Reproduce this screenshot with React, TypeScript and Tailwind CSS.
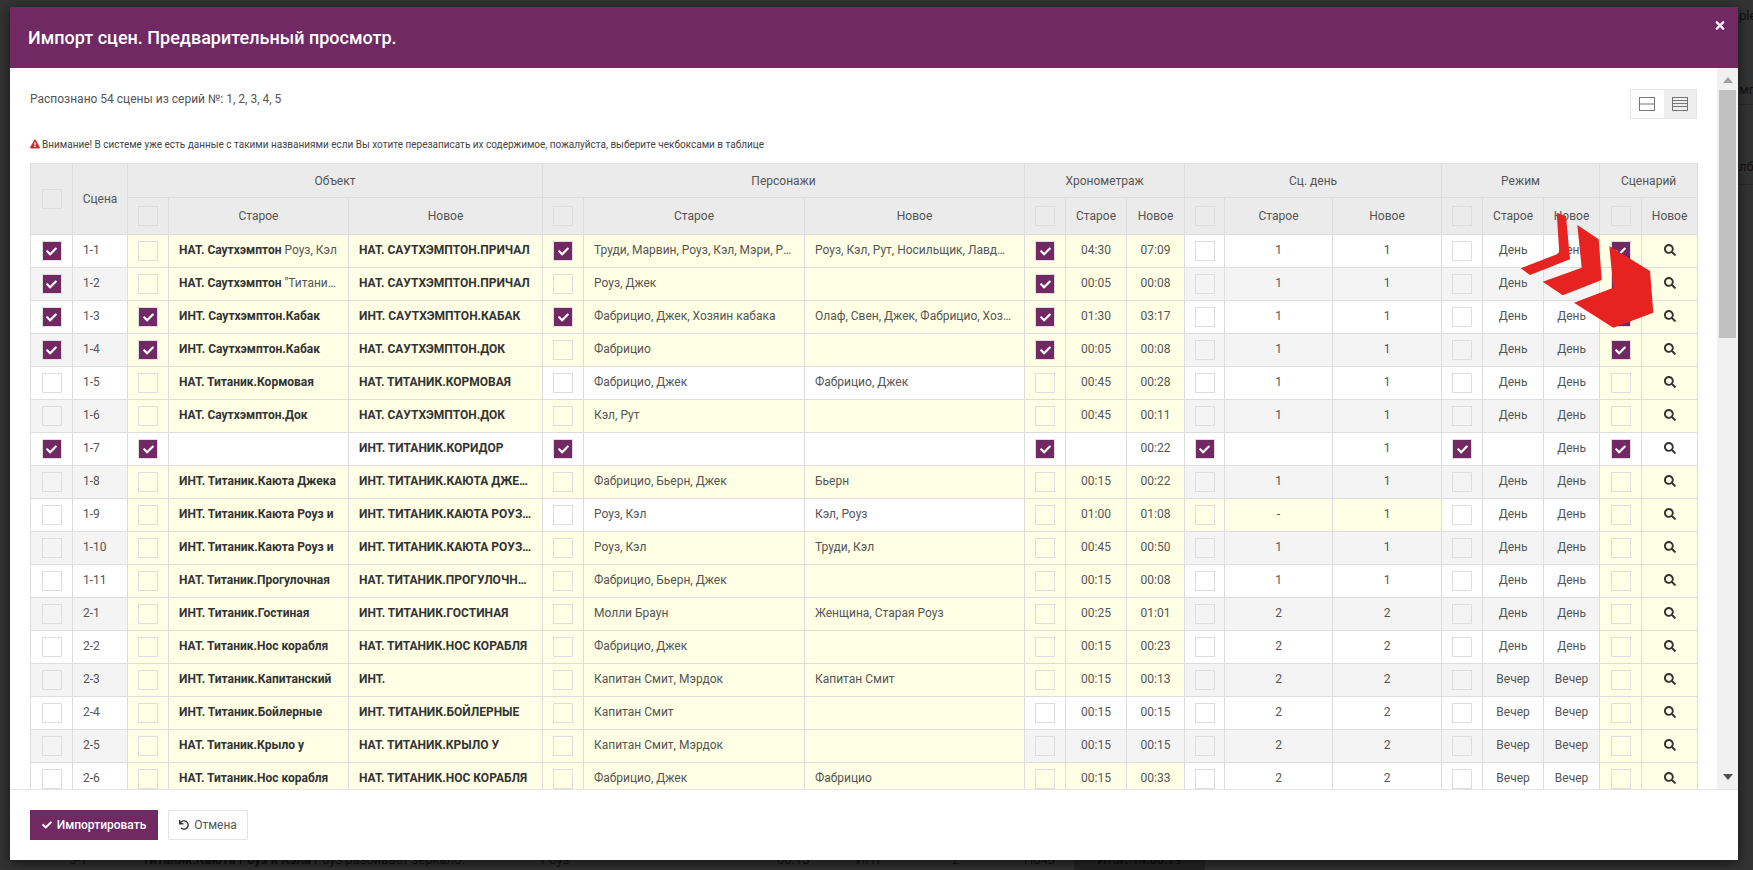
// Import preview modal over a dimmed page
import { FaCheck, FaExclamationTriangle, FaSearch, FaTimes, FaUndo } from "react-icons/fa";

type Row = {
  s: string;
  checks: string; // 0 = select, O P T D M S = groups that are ticked
  hl: string; // groups with yellow background
  objB: string;
  objN?: string;
  objNew: string;
  pOld?: string;
  pNew?: string;
  tOld?: string;
  tNew: string;
  dOld?: string;
  dNew: string;
  mOld?: string;
  mNew: string;
};

const rows: Row[] = [
  { s: "1-1", checks: "0PTS", hl: "OPTS", objB: "НАТ. Саутхэмптон", objN: " Роуз, Кэл", objNew: "НАТ. САУТХЭМПТОН.ПРИЧАЛ", pOld: "Труди, Марвин, Роуз, Кэл, Мэри, Рут", pNew: "Роуз, Кэл, Рут, Носильщик, Лавджой, Мэри", tOld: "04:30", tNew: "07:09", dOld: "1", dNew: "1", mOld: "День", mNew: "День" },
  { s: "1-2", checks: "0TS", hl: "OPTS", objB: "НАТ. Саутхэмптон", objN: ' "Титаник"', objNew: "НАТ. САУТХЭМПТОН.ПРИЧАЛ", pOld: "Роуз, Джек", tOld: "00:05", tNew: "00:08", dOld: "1", dNew: "1", mOld: "День", mNew: "День" },
  { s: "1-3", checks: "0OPTS", hl: "OPTS", objB: "ИНТ. Саутхэмптон.Кабак", objNew: "ИНТ. САУТХЭМПТОН.КАБАК", pOld: "Фабрицио, Джек, Хозяин кабака", pNew: "Олаф, Свен, Джек, Фабрицио, Хозяин кабака", tOld: "01:30", tNew: "03:17", dOld: "1", dNew: "1", mOld: "День", mNew: "День" },
  { s: "1-4", checks: "0OTS", hl: "OPTS", objB: "ИНТ. Саутхэмптон.Кабак", objNew: "НАТ. САУТХЭМПТОН.ДОК", pOld: "Фабрицио", tOld: "00:05", tNew: "00:08", dOld: "1", dNew: "1", mOld: "День", mNew: "День" },
  { s: "1-5", checks: "", hl: "OTS", objB: "НАТ. Титаник.Кормовая", objNew: "НАТ. ТИТАНИК.КОРМОВАЯ", pOld: "Фабрицио, Джек", pNew: "Фабрицио, Джек", tOld: "00:45", tNew: "00:28", dOld: "1", dNew: "1", mOld: "День", mNew: "День" },
  { s: "1-6", checks: "", hl: "OPTS", objB: "НАТ. Саутхэмптон.Док", objNew: "НАТ. САУТХЭМПТОН.ДОК", pOld: "Кэл, Рут", tOld: "00:45", tNew: "00:11", dOld: "1", dNew: "1", mOld: "День", mNew: "День" },
  { s: "1-7", checks: "0OPTDMS", hl: "", objB: "", objNew: "ИНТ. ТИТАНИК.КОРИДОР", tNew: "00:22", dNew: "1", mNew: "День" },
  { s: "1-8", checks: "", hl: "OPTS", objB: "ИНТ. Титаник.Каюта Джека", objNew: "ИНТ. ТИТАНИК.КАЮТА ДЖЕКА", pOld: "Фабрицио, Бьерн, Джек", pNew: "Бьерн", tOld: "00:15", tNew: "00:22", dOld: "1", dNew: "1", mOld: "День", mNew: "День" },
  { s: "1-9", checks: "", hl: "OTDS", objB: "ИНТ. Титаник.Каюта Роуз и", objNew: "ИНТ. ТИТАНИК.КАЮТА РОУЗ И", pOld: "Роуз, Кэл", pNew: "Кэл, Роуз", tOld: "01:00", tNew: "01:08", dOld: "-", dNew: "1", mOld: "День", mNew: "День" },
  { s: "1-10", checks: "", hl: "OPTS", objB: "ИНТ. Титаник.Каюта Роуз и", objNew: "ИНТ. ТИТАНИК.КАЮТА РОУЗ И", pOld: "Роуз, Кэл", pNew: "Труди, Кэл", tOld: "00:45", tNew: "00:50", dOld: "1", dNew: "1", mOld: "День", mNew: "День" },
  { s: "1-11", checks: "", hl: "OPTS", objB: "НАТ. Титаник.Прогулочная", objNew: "НАТ. ТИТАНИК.ПРОГУЛОЧНАЯ", pOld: "Фабрицио, Бьерн, Джек", tOld: "00:15", tNew: "00:08", dOld: "1", dNew: "1", mOld: "День", mNew: "День" },
  { s: "2-1", checks: "", hl: "OPTS", objB: "ИНТ. Титаник.Гостиная", objNew: "ИНТ. ТИТАНИК.ГОСТИНАЯ", pOld: "Молли Браун", pNew: "Женщина, Старая Роуз", tOld: "00:25", tNew: "01:01", dOld: "2", dNew: "2", mOld: "День", mNew: "День" },
  { s: "2-2", checks: "", hl: "OPTS", objB: "НАТ. Титаник.Нос корабля", objNew: "НАТ. ТИТАНИК.НОС КОРАБЛЯ", pOld: "Фабрицио, Джек", tOld: "00:15", tNew: "00:23", dOld: "2", dNew: "2", mOld: "День", mNew: "День" },
  { s: "2-3", checks: "", hl: "OPTS", objB: "ИНТ. Титаник.Капитанский", objNew: "ИНТ.", pOld: "Капитан Смит, Мэрдок", pNew: "Капитан Смит", tOld: "00:15", tNew: "00:13", dOld: "2", dNew: "2", mOld: "Вечер", mNew: "Вечер" },
  { s: "2-4", checks: "", hl: "OPS", objB: "ИНТ. Титаник.Бойлерные", objNew: "ИНТ. ТИТАНИК.БОЙЛЕРНЫЕ", pOld: "Капитан Смит", tOld: "00:15", tNew: "00:15", dOld: "2", dNew: "2", mOld: "Вечер", mNew: "Вечер" },
  { s: "2-5", checks: "", hl: "OPS", objB: "НАТ. Титаник.Крыло у", objNew: "НАТ. ТИТАНИК.КРЫЛО У", pOld: "Капитан Смит, Мэрдок", tOld: "00:15", tNew: "00:15", dOld: "2", dNew: "2", mOld: "Вечер", mNew: "Вечер" },
  { s: "2-6", checks: "", hl: "OPTS", objB: "НАТ. Титаник.Нос корабля", objNew: "НАТ. ТИТАНИК.НОС КОРАБЛЯ", pOld: "Фабрицио, Джек", pNew: "Фабрицио", tOld: "00:15", tNew: "00:33", dOld: "2", dNew: "2", mOld: "Вечер", mNew: "Вечер" },
];

const widths = [42, 55, 41, 180, 194, 41, 221, 220, 41, 61, 58, 40, 108, 109, 41, 61, 56, 42, 56];

function Box({ on }: { on?: boolean }) {
  if (on) {
    return (
      <span className="mx-auto flex h-[20px] w-[20px] items-center justify-center border border-[#dddddd] bg-[#702963] text-white">
        <FaCheck className="h-[11px] w-[11px]" />
      </span>
    );
  }
  return <span className="mx-auto block h-[20px] w-[20px] border border-[#dddddd]" />;
}

const th = "border border-[#dddddd] bg-[#ebebeb] text-center text-[12px] font-normal text-[#555555]";
const td = "border border-[#dddddd] p-0";

function DataRow({ row, index }: { row: Row; index: number }) {
  const base = index % 2 === 1 ? "bg-[#f4f4f4]" : "bg-white";
  const bg = (g: string) => (row.hl.includes(g) ? "bg-[#ffffe6]" : base);
  const tick = (g: string) => row.checks.includes(g);
  const center = (g: string) => `${td} ${bg(g)} pb-[3px] text-center`;
  const left = (g: string) => `${td} ${bg(g)} truncate px-[10px] pb-[3px]`;
  return (
    <tr className="h-[33px] text-[12px] text-[#555555]">
      <td className={`${td} ${base}`}><Box on={tick("0")} /></td>
      <td className={`${td} ${base} truncate px-[10px] pb-[3px]`}>{row.s}</td>
      <td className={`${td} ${bg("O")}`}><Box on={tick("O")} /></td>
      <td className={left("O")}>
        <b className="font-bold text-[#333333]">{row.objB}</b>
        {row.objN}
      </td>
      <td className={`${left("O")} font-bold text-[#333333]`}>{row.objNew}</td>
      <td className={`${td} ${bg("P")}`}><Box on={tick("P")} /></td>
      <td className={left("P")}>{row.pOld}</td>
      <td className={left("P")}>{row.pNew}</td>
      <td className={`${td} ${bg("T")}`}><Box on={tick("T")} /></td>
      <td className={center("T")}>{row.tOld}</td>
      <td className={center("T")}>{row.tNew}</td>
      <td className={`${td} ${bg("D")}`}><Box on={tick("D")} /></td>
      <td className={center("D")}>{row.dOld}</td>
      <td className={center("D")}>{row.dNew}</td>
      <td className={`${td} ${bg("M")}`}><Box on={tick("M")} /></td>
      <td className={center("M")}>{row.mOld}</td>
      <td className={center("M")}>{row.mNew}</td>
      <td className={`${td} ${bg("S")}`}><Box on={tick("S")} /></td>
      <td className={center("S")}>
        <FaSearch className="mx-auto h-[12px] w-[12px] text-[#333333]" />
      </td>
    </tr>
  );
}

function ScenesTable() {
  const sub = (check: boolean, label?: string) =>
    check ? <th className={th}><Box /></th> : <th className={th}>{label}</th>;
  return (
    <table className="w-[1667px] table-fixed border-collapse">
      <colgroup>
        {widths.map((w, i) => (
          <col key={i} style={{ width: w }} />
        ))}
      </colgroup>
      <thead>
        <tr className="h-[34px]">
          <th rowSpan={2} className={th}><Box /></th>
          <th rowSpan={2} className={th}>Сцена</th>
          <th colSpan={3} className={th}>Объект</th>
          <th colSpan={3} className={th}>Персонажи</th>
          <th colSpan={3} className={th}>Хронометраж</th>
          <th colSpan={3} className={th}>Сц. день</th>
          <th colSpan={3} className={th}>Режим</th>
          <th colSpan={2} className={th}>Сценарий</th>
        </tr>
        <tr className="h-[37px]">
          {sub(true)}{sub(false, "Старое")}{sub(false, "Новое")}
          {sub(true)}{sub(false, "Старое")}{sub(false, "Новое")}
          {sub(true)}{sub(false, "Старое")}{sub(false, "Новое")}
          {sub(true)}{sub(false, "Старое")}{sub(false, "Новое")}
          {sub(true)}{sub(false, "Старое")}{sub(false, "Новое")}
          {sub(true)}{sub(false, "Новое")}
        </tr>
      </thead>
      <tbody>
        {rows.map((r, i) => (
          <DataRow key={r.s} row={r} index={i} />
        ))}
      </tbody>
    </table>
  );
}

function ViewToggle() {
  return (
    <div className="flex h-[30px] w-[67px] border border-[#e5e5e5]">
      <div className="flex flex-1 items-center justify-center bg-white">
        <svg width="16" height="14" viewBox="0 0 16 14" fill="none" stroke="#777777">
          <rect x="0.5" y="0.5" width="15" height="13" />
          <path d="M0 7h16" />
        </svg>
      </div>
      <div className="flex flex-1 items-center justify-center bg-[#eeeeee]">
        <svg width="16" height="14" viewBox="0 0 16 14" fill="none" stroke="#777777">
          <rect x="0.5" y="0.5" width="15" height="13" />
          <path d="M0 3.5h16M0 6.5h16M0 9.5h16" />
        </svg>
      </div>
    </div>
  );
}

export default function App() {
  return (
    <div className="relative h-[870px] w-[1753px] overflow-hidden bg-[#333333] [font-family:Roboto,sans-serif]">
      <div className="flex">
        <div className="relative z-10 ml-[10px] mt-[7px] flex h-[853px] w-[1728px] flex-col bg-white shadow-[0_3px_12px_rgba(0,0,0,0.6)]">
          <div className="flex h-[61px] shrink-0 items-start justify-between bg-[#702963] pl-[18px] pr-[12px] text-white">
            <h4 className="mt-[18px] text-[18px] leading-[26px] font-medium">Импорт сцен. Предварительный просмотр.</h4>
            <FaTimes className="mt-[12px] h-[13px] w-[12px] text-[#f1e6ef]" />
          </div>

          <div className="flex min-h-0 flex-1">
            <div className="min-w-0 flex-1 overflow-hidden pl-[20px] pt-[21px]">
              <div className="flex justify-between pr-[20px]">
                <p className="pt-[1px] text-[12px] leading-[18px] text-[#555555]">Распознано 54 сцены из серий №: 1, 2, 3, 4, 5</p>
                <ViewToggle />
              </div>
              <p className="mt-[18px] flex h-[14px] items-center gap-[2px] text-[10px] text-[#444444]">
                <FaExclamationTriangle className="h-[10px] w-[10px] text-[#c9302c]" />
                Внимание! В системе уже есть данные с такими названиями если Вы хотите перезаписать их содержимое, пожалуйста, выберите чекбоксами в таблице
              </p>
              <div className="mt-[12px]">
                <ScenesTable />
              </div>
            </div>

            <div className="flex w-[21px] shrink-0 flex-col items-center bg-[#f1f1f1]">
              <span className="mt-[9px] h-0 w-0 border-x-[5px] border-b-[6px] border-x-transparent border-b-[#a3a3a3]" />
              <span className="mt-[7px] h-[248px] w-[17px] bg-[#c1c1c1]" />
              <span className="mb-[9px] mt-auto h-0 w-0 border-x-[5px] border-t-[6px] border-x-transparent border-t-[#505050]" />
            </div>
          </div>

          <div className="flex h-[71px] shrink-0 items-start gap-[10px] border-t border-[#e5e5e5] pl-[20px] pt-[20px] text-[12px]">
            <button className="flex h-[30px] w-[128px] items-center justify-center gap-[5px] bg-[#702963] font-medium text-white">
              <FaCheck className="h-[10px] w-[10px]" />
              Импортировать
            </button>
            <button className="flex h-[30px] w-[80px] items-center justify-center gap-[5px] border border-[#e5e5e5] bg-white text-[#555555]">
              <FaUndo className="h-[10px] w-[10px] text-[#333333]" />
              Отмена
            </button>
          </div>
        </div>

        {/* page behind the modal, right edge */}
        <div className="ml-[1px] w-[14px] overflow-hidden whitespace-nowrap text-[13px] text-[#111111]">
          <div className="h-[76px] border-b border-[#2b3540] pt-[6px]">ple</div>
          <div className="h-[29px] border-b border-[#2b2b2b] pt-[4px]">мп</div>
          <div className="h-[80px] border-b border-[#2b2b2b] pt-[52px]">лбц</div>
        </div>
      </div>

      {/* page behind the modal, bottom edge */}
      <div className="-mt-[8px] flex h-[18px] items-start whitespace-nowrap text-[13px] leading-[16px] text-[#111111]">
        <span className="ml-[69px] w-[73px]">3-1</span>
        <span className="w-[399px]"><b className="font-bold">Титаник.Каюта Роуз и Кэла</b> Роуз разбивает зеркало.</span>
        <span className="w-[236px]">Роуз</span>
        <span className="w-[79px]">00:15</span>
        <span className="w-[96px]">ИНТ</span>
        <span className="w-[72px]">2</span>
        <span className="w-[50px]">Ночь</span>
        <span className="flex h-[18px] w-[131px] justify-center bg-[#252525] text-[#0c0c0c]">Итог: 14:00:19</span>
      </div>

      {/* red arrows pasted on the screenshot */}
      <svg className="absolute left-[1520px] top-[210px] z-20" width="140" height="120" viewBox="1520 210 140 120" fill="#e62320">
        <polygon points="1556.7,212.7 1566,216 1570,259.3 1530,275 1520.7,268.3 1559.3,253.3" />
        <polygon points="1577.3,225 1598.7,239.3 1601.7,280 1562.7,295.3 1542.7,281.7 1581.7,267.7" />
        <polygon points="1609.3,246 1650,271 1653.3,312.7 1613.3,327.7 1574,302.7 1613.3,287.7" />
      </svg>
    </div>
  );
}
